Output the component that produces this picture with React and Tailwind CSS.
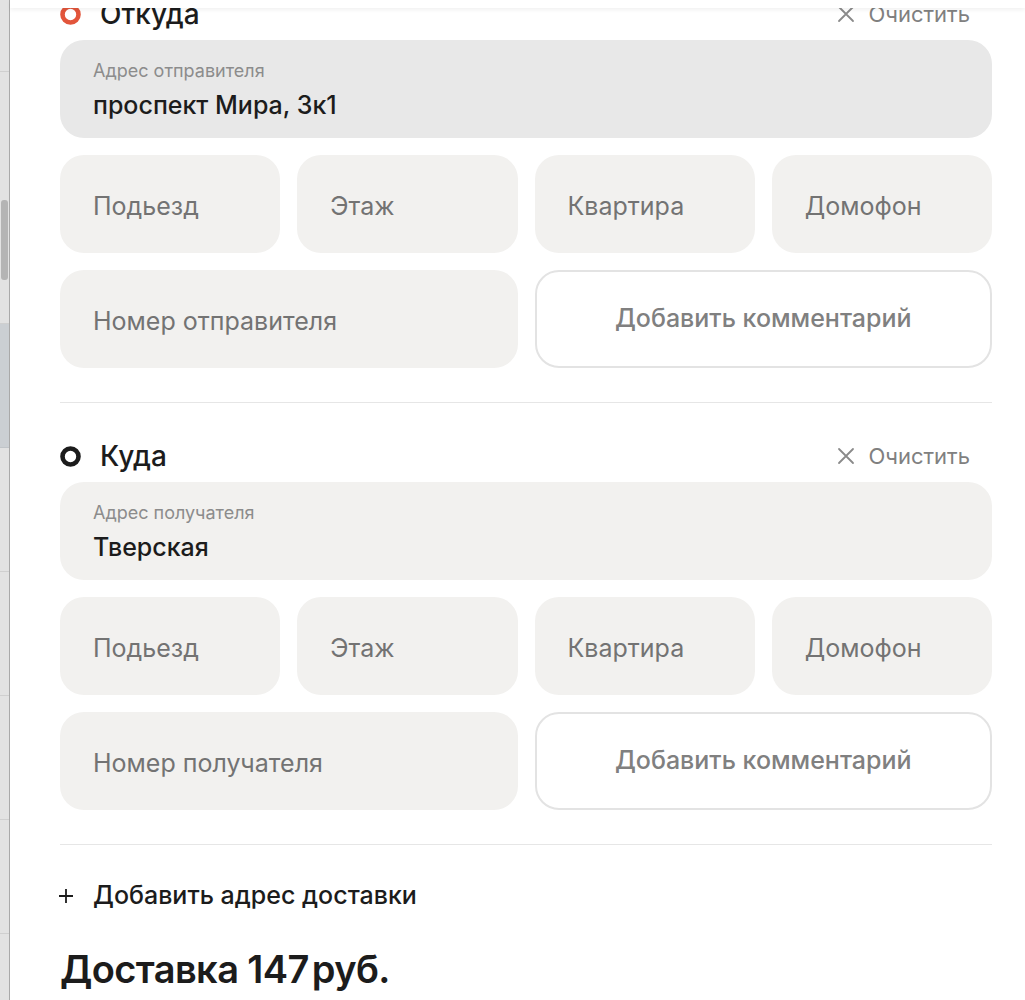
import React from 'react';

const font = { fontFamily: '"Inter", "Noto Sans", sans-serif' };

const Ring = ({ color }) => (
    <svg width="21" height="21" viewBox="0 0 21 21" className="shrink-0">
        <circle cx="10.5" cy="10.5" r="8" fill="none" stroke={color} strokeWidth="4.6" />
    </svg>
);

const Cross = () => (
    <svg width="18" height="18" viewBox="0 0 18 18" className="shrink-0">
        <path d="M2 2 L16 16 M16 2 L2 16" stroke="#8a8a8a" strokeWidth="1.8" strokeLinecap="round" />
    </svg>
);

const SmallField = ({ label }) => (
    <div className="h-[98px] rounded-[24px] bg-[#f2f1ef] flex items-center pl-[33px] pt-[6px] text-[25px] text-[#737373]">
        {label}
    </div>
);

const Section = ({ title, ringColor, addrLabel, addr, active, phoneLabel }) => (
    <div>
        <div className="h-[28px] flex items-center">
            <Ring color={ringColor} />
            <span className="ml-[19px] text-[28px] font-medium text-[#1c1c1c]">{title}</span>
            <div className="ml-auto mr-[22px] flex items-center gap-[13px] text-[22px] text-[#808080]">
                <Cross />
                <span>Очистить</span>
            </div>
        </div>
        <div className={`mt-[12px] h-[98px] rounded-[24px] pl-[33px] flex flex-col justify-center ${active ? 'bg-[#e8e8e8]' : 'bg-[#f2f1ef]'}`}>
            <div className="text-[18px] text-[#8c8c8c] leading-[22px] pt-[2px]">{addrLabel}</div>
            <div className="mt-[8px] text-[25px] font-medium text-[#1c1c1c] leading-[30px]">{addr}</div>
        </div>
        <div className="mt-[17px] grid grid-cols-4 gap-[17px]">
            <SmallField label="Подьезд" />
            <SmallField label="Этаж" />
            <SmallField label="Квартира" />
            <SmallField label="Домофон" />
        </div>
        <div className="mt-[17px] grid grid-cols-2 gap-[17px]">
            <SmallField label={phoneLabel} />
            <button className="h-[98px] rounded-[24px] border-2 border-[#e3e3e3] bg-white text-[25px] font-medium text-[#808080]">
                Добавить комментарий
            </button>
        </div>
    </div>
);

export default function App() {
    return (
        <div className="flex h-[1000px] overflow-hidden bg-white" style={font}>
            <div className="w-[10px] shrink-0 border-r border-[#a9a9a9] bg-[#e2e2e2] flex flex-col">
                <div className="h-[72px] border-b border-[#cfcfcf]" />
                <div className="h-[252px] border-b border-[#cfcfcf] relative">
                    <div className="absolute left-[1px] right-[1px] top-[128px] h-[80px] rounded-[3px] bg-[#b4b4b4]" />
                </div>
                <div className="h-[124px] border-b border-[#c0c4c8] bg-[#cbcfd3]" />
                <div className="h-[124px] border-b border-[#cfcfcf]" />
                <div className="h-[124px] border-b border-[#cfcfcf]" />
                <div className="h-[124px] border-b border-[#cfcfcf]" />
                <div className="h-[114px] border-b border-[#cfcfcf]" />
                <div className="flex-1" />
            </div>
            <div className="relative flex-1 pl-[50px] pr-[33px]">
                <div className="absolute left-0 right-0 top-0 h-[8px] bg-white shadow-[0_2px_4px_rgba(0,0,0,0.06)] z-10" />
                <Section
                    title="Откуда"
                    ringColor="#e2553b"
                    addrLabel="Адрес отправителя"
                    addr="проспект Мира, 3к1"
                    active
                    phoneLabel="Номер отправителя"
                />
                <div className="mt-[34px] h-px bg-[#e6e6e6]" />
                <div className="mt-[39px]">
                    <Section
                        title="Куда"
                        ringColor="#1c1c1c"
                        addrLabel="Адрес получателя"
                        addr="Тверская"
                        phoneLabel="Номер получателя"
                    />
                </div>
                <div className="mt-[34px] h-px bg-[#e6e6e6]" />
                <div className="mt-[37px] flex items-center h-[28px] text-[25px] font-medium text-[#1c1c1c]">
                    <svg width="16" height="16" viewBox="0 0 16 16" className="ml-[-2px]">
                        <path d="M8 1 V15 M1 8 H15" stroke="#1c1c1c" strokeWidth="1.8" />
                    </svg>
                    <span className="ml-[19px]">Добавить адрес доставки</span>
                </div>
                <div className="mt-[36px] text-[38px] font-semibold tracking-[-0.6px] text-[#1c1c1c] leading-[46px]">
                    Доставка 147<span className="ml-[3px]">руб.</span>
                </div>
            </div>
        </div>
    );
}
